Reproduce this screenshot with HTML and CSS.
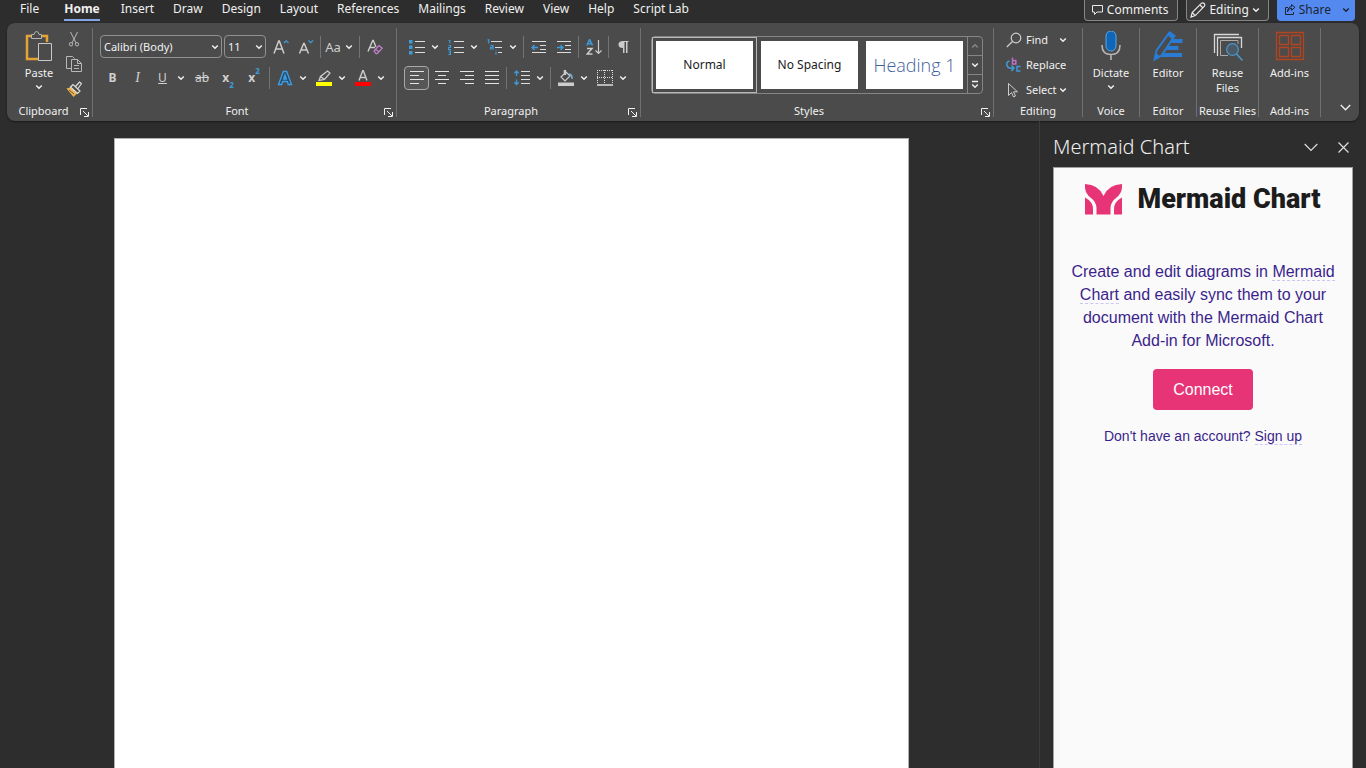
FILE: index.html
```
<!DOCTYPE html>
<html lang="en">
<head>
    <meta charset="UTF-8">
    <meta name="viewport" content="width=device-width, initial-scale=1.0">
    <title>Document - Mermaid Chart</title>
    <link rel="stylesheet" href="styles.css">
</head>
<body>
    <svg class="defs" aria-hidden="true">
        <symbol id="chev" viewBox="0 0 8 6"><path d="M1.2 1.5L4 4.2l2.8-2.7" fill="none" stroke="currentColor" stroke-width="1.5"/></symbol>
        <symbol id="launch" viewBox="0 0 9 9"><path d="M.5 7V.5H7M3 3l5 5M8.500 4v4.500H4" fill="none" stroke="currentColor"/></symbol>
    </svg>

    <header class="topbar">
        <nav class="tabs">
            <a href="#">File</a>
            <a href="#" class="active">Home</a>
            <a href="#">Insert</a>
            <a href="#">Draw</a>
            <a href="#">Design</a>
            <a href="#">Layout</a>
            <a href="#">References</a>
            <a href="#">Mailings</a>
            <a href="#">Review</a>
            <a href="#">View</a>
            <a href="#">Help</a>
            <a href="#">Script Lab</a>
        </nav>
        <div class="actions">
            <button class="action">
                <svg width="13" height="12" viewBox="0 0 13 12"><path d="M1.500 1.500h10v6.500H6L3.500 10.500V8h-2z" fill="none" stroke="#e8e8e8"/></svg>
                Comments
            </button>
            <button class="action mode">
                <svg width="16" height="16" viewBox="0 0 16 16"><path d="M1 15l1.200-4.500L11.500 1.200q1.500-.8 2.600.3t.3 2.600L5.300 13.600zM10 3l3 3M2.200 10.500l3.100 3.100" fill="none" stroke="#e8e8e8" stroke-width="1.200"/></svg>
                Editing
                <svg class="chev"><use href="#chev"/></svg>
            </button>
            <button class="action share">
                <svg width="12" height="12" viewBox="0 0 12 12"><path d="M4 3.500H1.500v7h8V8M3.500 8q.3-3.500 4-3.800V6.300L11 3.300 7.500.6v2q-3.700.3-4 5.400z" fill="none" stroke="#1c2433"/></svg>
                Share
                <svg class="chev"><use href="#chev"/></svg>
            </button>
        </div>
    </header>

    <section class="ribbon">
        <div class="group clipboard">
            <div class="group-body">
                <button class="big">
                    <svg width="28" height="32" viewBox="0 0 28 32">
                        <path d="M7 5H2v23h11M17 5h5v6" fill="none" stroke="#e5a336" stroke-width="2.500"/>
                        <path d="M6.500 7.500v-4H9q.5-3 2.500-3t2.500 3h2.500v4z" fill="#4b4b4b" stroke="#b5b5b5"/>
                        <path d="M13.500 12.500h13v17h-13z" fill="#4b4b4b" stroke="#c8c8c8"/>
                    </svg>
                    <span>Paste</span>
                    <svg class="chev"><use href="#chev"/></svg>
                </button>
                <div class="stack">
                    <button class="tool" aria-label="Cut"><svg width="16" height="16" viewBox="0 0 16 16"><path d="M4.500 1l5.500 11M11.500 1L6 12" fill="none" stroke="#b8b8b8"/><circle cx="5" cy="13.300" r="1.700" fill="none" stroke="#b8b8b8"/><circle cx="11" cy="13.300" r="1.700" fill="none" stroke="#b8b8b8"/></svg></button>
                    <button class="tool" aria-label="Copy"><svg width="16" height="16" viewBox="0 0 16 16"><path d="M5 12.500H.5v-12h6l2 2M5.500 3.500h6l4 4v8h-10zM11.500 3.500v4h4M8 9.500h5M8 12.500h5" fill="none" stroke="#b8b8b8"/></svg></button>
                    <button class="tool" aria-label="Format painter"><svg width="16" height="16" viewBox="0 0 16 16"><path d="M.5 7.500l5-1.500 6 6-4 4z" fill="#eeb451"/><path d="M4.500 6l2.500-2.500 7 6.500-2.500 2.500zM9.500 5.500L13.500 1l2 1.500L12 7.500" fill="#4b4b4b" stroke="#ddd" stroke-width="1.200"/><path d="M3 9l5 4" stroke="#805a20"/></svg></button>
                </div>
            </div>
            <div class="caption">Clipboard<button class="launch" aria-label="Clipboard options"><svg width="9" height="9"><use href="#launch"/></svg></button></div>
        </div>

        <div class="group font">
            <div class="group-body rows">
                <div class="row">
                    <label class="combo family"><select aria-label="Font"><option>Calibri (Body)</option></select><svg class="chev"><use href="#chev"/></svg></label>
                    <label class="combo size"><select aria-label="Font size"><option>11</option></select><svg class="chev"><use href="#chev"/></svg></label>
                    <button class="tool" aria-label="Grow font"><svg width="16" height="16" viewBox="0 0 16 16"><path d="M1 14.500L5.700 2h.6L11 14.500M2.800 10h6.500" fill="none" stroke="#ccc" stroke-width="1.500"/><path d="M11 4l2.200-2.200L15.500 4" fill="none" stroke="#3f9bd8" stroke-width="1.300"/></svg></button>
                    <button class="tool" aria-label="Shrink font"><svg width="16" height="16" viewBox="0 0 16 16"><path d="M1.500 14.500L5.700 4.500h.5l4.300 10M3 11h6" fill="none" stroke="#ccc" stroke-width="1.500"/><path d="M10.500 1.500l2.200 2.200L15 1.500" fill="none" stroke="#3f9bd8" stroke-width="1.300"/></svg></button>
                    <span class="sep"></span>
                    <div class="split"><button class="tool case">Aa</button><button class="drop" aria-label="Case options"><svg class="chev"><use href="#chev"/></svg></button></div>
                    <span class="sep"></span>
                    <button class="tool" aria-label="Clear formatting"><svg width="16" height="16" viewBox="0 0 16 16"><path d="M1 12.500L5.700 1.500h.6L9 8M3 8.500h5" fill="none" stroke="#ccc" stroke-width="1.400"/><path d="M7 12l5-5.500 3.200 2.700-5 5.500H9zM8.500 10l3.500 3" fill="none" stroke="#c77fd0" stroke-width="1.200"/></svg></button>
                </div>
                <div class="row">
                    <button class="tool bold">B</button>
                    <button class="tool italic">I</button>
                    <div class="split"><button class="tool underline">U</button><button class="drop" aria-label="Underline options"><svg class="chev"><use href="#chev"/></svg></button></div>
                    <button class="tool script strike">ab</button>
                    <button class="tool script bold">x<sub>2</sub></button>
                    <button class="tool script bold">x<sup>2</sup></button>
                    <span class="sep"></span>
                    <div class="split">
                        <button class="tool" aria-label="Text effects"><svg width="16" height="16" viewBox="0 0 16 16"><path d="M1.500 14.500L6.300 1.500h3.400l4.800 13h-3.200l-1-3H5.700l-1 3zM6.600 9h2.800L8 5z" fill="#264c6b" stroke="#3f9ee6" stroke-width="1.300"/></svg></button>
                        <button class="drop" aria-label="Text effect options"><svg class="chev"><use href="#chev"/></svg></button>
                    </div>
                    <div class="split">
                        <button class="tool" aria-label="Highlight"><svg width="16" height="16" viewBox="0 0 16 16"><path d="M0 12h16v4H0z" fill="#ff0"/><path d="M3 10.500l1.500-4 7-5.500 2.500 2-5.500 6.500zM4.500 6.500l4 3" fill="none" stroke="#ccc" stroke-width="1.300"/></svg></button>
                        <button class="drop" aria-label="Highlight colors"><svg class="chev"><use href="#chev"/></svg></button>
                    </div>
                    <div class="split">
                        <button class="tool" aria-label="Font color"><svg width="16" height="16" viewBox="0 0 16 16"><path d="M0 12h16v4H0z" fill="#f00"/><path d="M4 10.500L7.700.8h.6L12 10.500M5.200 7.500h5.600" fill="none" stroke="#ccc" stroke-width="1.400"/></svg></button>
                        <button class="drop" aria-label="Font colors"><svg class="chev"><use href="#chev"/></svg></button>
                    </div>
                </div>
            </div>
            <div class="caption">Font<button class="launch" aria-label="Font options"><svg width="9" height="9"><use href="#launch"/></svg></button></div>
        </div>

        <div class="group paragraph">
            <div class="group-body rows">
                <div class="row">
                    <div class="split">
                        <button class="tool" aria-label="Bullets"><svg width="16" height="16" viewBox="0 0 16 16"><path d="M0 1h3.500v3.500H0zM0 6.500h3.500V10H0zM0 12h3.500v3.500H0z" fill="#3f9bd8"/><path d="M6 2.500h10M6 8.500h10M6 13.500h10" stroke="#ddd"/></svg></button>
                        <button class="drop" aria-label="Bullet library"><svg class="chev"><use href="#chev"/></svg></button>
                    </div>
                    <div class="split">
                        <button class="tool" aria-label="Numbering"><svg width="16" height="16" viewBox="0 0 16 16"><path d="M.5 1.500h1.300V4.500M.5 6.500h2v2h-2v2h2.500M.5 12h2v3.500H.3M1 13.700h1.500" fill="none" stroke="#3f9bd8" stroke-width="1.100"/><path d="M6 2.500h10M6 8.500h10M6 13.500h10" stroke="#ddd"/></svg></button>
                        <button class="drop" aria-label="Numbering library"><svg class="chev"><use href="#chev"/></svg></button>
                    </div>
                    <div class="split">
                        <button class="tool" aria-label="Multilevel list"><svg width="16" height="16" viewBox="0 0 16 16"><path d="M.5.800h1.300V4.500M3.500 6.500h2.500V10H3.500V8.300H6M9 11v.800M9 13v2.500" fill="none" stroke="#3f9bd8" stroke-width="1.200"/><path d="M4 2.500h11M8 8.500h7M11 13.500h4" stroke="#ddd"/></svg></button>
                        <button class="drop" aria-label="List library"><svg class="chev"><use href="#chev"/></svg></button>
                    </div>
                    <span class="sep"></span>
                    <button class="tool" aria-label="Decrease indent"><svg width="16" height="16" viewBox="0 0 16 16"><path d="M1 2.500h14M9 6.500h6M9 10.500h6M1 13.500h14" stroke="#ddd"/><path d="M7 8.500H1.500M3.500 6l-2.500 2.500L3.500 11" fill="none" stroke="#3f9bd8" stroke-width="1.300"/></svg></button>
                    <button class="tool" aria-label="Increase indent"><svg width="16" height="16" viewBox="0 0 16 16"><path d="M1 2.500h14M9 6.500h6M9 10.500h6M1 13.500h14" stroke="#ddd"/><path d="M1 8.500h5.500M4.500 6L7 8.500 4.500 11" fill="none" stroke="#3f9bd8" stroke-width="1.300"/></svg></button>
                    <span class="sep"></span>
                    <button class="tool" aria-label="Sort"><svg width="16" height="16" viewBox="0 0 16 16"><path d="M.8 6.500L3.500.8h.3l2.700 5.700M1.800 4.700h3.700" fill="none" stroke="#3f9bd8" stroke-width="1.500"/><path d="M1 9.500h5L1.200 15h5.300" fill="none" stroke="#ccc" stroke-width="1.500"/><path d="M12.500 1v13.500M9.500 11.500l3 3 3-3" fill="none" stroke="#ccc" stroke-width="1.200"/></svg></button>
                    <span class="sep"></span>
                    <button class="tool" aria-label="Show marks"><svg width="16" height="16" viewBox="0 0 16 16"><path d="M7 2h5.500v1H11.500v11h-1.500V3H8.500v11H7V9Q2.500 9 2.500 5.500T7 2z" fill="#ccc"/></svg></button>
                </div>
                <div class="row">
                    <button class="tool pressed" aria-label="Align left"><svg width="16" height="16" viewBox="0 0 16 16"><path d="M1 1.500h14M1 5.500h9M1 9.500h14M1 13.500h9" stroke="#e4e4e4"/></svg></button>
                    <button class="tool" aria-label="Center"><svg width="16" height="16" viewBox="0 0 16 16"><path d="M1 1.500h14M4 5.500h8M1 9.500h14M4 13.500h8" stroke="#e4e4e4"/></svg></button>
                    <button class="tool" aria-label="Align right"><svg width="16" height="16" viewBox="0 0 16 16"><path d="M1 1.500h14M6 5.500h9M1 9.500h14M6 13.500h9" stroke="#e4e4e4"/></svg></button>
                    <button class="tool" aria-label="Justify"><svg width="16" height="16" viewBox="0 0 16 16"><path d="M1 1.500h14M1 5.500h14M1 9.500h14M1 13.500h14" stroke="#e4e4e4"/></svg></button>
                    <span class="sep"></span>
                    <div class="split">
                        <button class="tool" aria-label="Line spacing"><svg width="16" height="16" viewBox="0 0 16 16"><path d="M2.500 1v5M.3 3.300L2.500 1l2.200 2.300M2.500 9.500v5M.3 12.200l2.200 2.300 2.200-2.300" fill="none" stroke="#3f9bd8" stroke-width="1.300"/><path d="M7 1.500h9M7 5.500h9M7 9.500h9M7 13.500h9" stroke="#ddd"/></svg></button>
                        <button class="drop" aria-label="Spacing options"><svg class="chev"><use href="#chev"/></svg></button>
                    </div>
                    <span class="sep"></span>
                    <div class="split">
                        <button class="tool" aria-label="Shading"><svg width="16" height="16" viewBox="0 0 16 16"><path d="M0 12.500h16V16H0z" fill="#ccc"/><path d="M3 7l5-5 4 4-5 5zM7.500 5V.500H6.300V3.500" fill="none" stroke="#ccc" stroke-width="1.200"/><path d="M11 4q3.500.5 3 5" fill="none" stroke="#72b4dd" stroke-width="1.500"/></svg></button>
                        <button class="drop" aria-label="Shading colors"><svg class="chev"><use href="#chev"/></svg></button>
                    </div>
                    <div class="split">
                        <button class="tool" aria-label="Borders"><svg width="16" height="16" viewBox="0 0 16 16"><path d="M0 .5h16M0 7.500h16M.5 0v14M7.500 0v14M15.500 0v14" fill="none" stroke="#ddd" stroke-dasharray="1 1"/><path d="M0 15h16" stroke="#ddd" stroke-width="1.500"/></svg></button>
                        <button class="drop" aria-label="Border options"><svg class="chev"><use href="#chev"/></svg></button>
                    </div>
                </div>
            </div>
            <div class="caption">Paragraph<button class="launch" aria-label="Paragraph options"><svg width="9" height="9"><use href="#launch"/></svg></button></div>
        </div>

        <div class="group styles">
            <div class="gallery">
                <button class="style selected">Normal</button>
                <button class="style">No Spacing</button>
                <button class="style heading">Heading 1</button>
                <div class="scroller">
                    <button class="dim" aria-label="Previous styles"><svg class="chev up"><use href="#chev"/></svg></button>
                    <button aria-label="Next styles"><svg class="chev"><use href="#chev"/></svg></button>
                    <button aria-label="All styles"><svg width="8" height="9" viewBox="0 0 8 9"><path d="M1 1.500h6M1.200 4.500L4 7.200l2.800-2.700" fill="none" stroke="currentColor" stroke-width="1.400"/></svg></button>
                </div>
            </div>
            <div class="caption">Styles<button class="launch" aria-label="Style options"><svg width="9" height="9"><use href="#launch"/></svg></button></div>
        </div>

        <div class="group editing">
            <div class="group-body list">
                <button class="command">
                    <svg width="16" height="16" viewBox="0 0 16 16"><circle cx="10" cy="6" r="4.800" fill="none" stroke="#ccc" stroke-width="1.200"/><path d="M6.500 9.500L.8 15" stroke="#ccc" stroke-width="1.300"/></svg>
                    Find
                    <svg class="chev far"><use href="#chev"/></svg>
                </button>
                <button class="command">
                    <svg width="16" height="16" viewBox="0 0 16 16"><path d="M6.500.5v6.500h3.300V3.500H6.500" fill="none" stroke="#c06fc8" stroke-width="1.500"/><path d="M14.500 9.500h-3.500v4.500h3.500M3.500 4Q0 5 1 8.500T8 11M5.500 8.500L8 11l-2.500 3" fill="none" stroke="#3f9bd8" stroke-width="1.500"/></svg>
                    Replace
                </button>
                <button class="command">
                    <svg width="16" height="16" viewBox="0 0 16 16"><path d="M2.500 1.500v12l3-3 2 4.500 2-1-2-4.200h4z" fill="none" stroke="#ccc"/></svg>
                    Select
                    <svg class="chev near"><use href="#chev"/></svg>
                </button>
            </div>
            <div class="caption">Editing</div>
        </div>

        <div class="group narrow">
            <button class="big">
                <svg width="28" height="32" viewBox="0 0 28 32"><rect x="9" y="0" width="10" height="20" rx="5" fill="#0f66b8" stroke="#5ba7e4"/><path d="M5 14q0 9.500 9 9.500t9-9.500M14 23.500V29" fill="none" stroke="#b5b5b5" stroke-width="1.600"/></svg>
                <span>Dictate</span>
                <svg class="chev"><use href="#chev"/></svg>
            </button>
            <div class="caption">Voice</div>
        </div>

        <div class="group narrow">
            <button class="big">
                <svg width="30" height="32" viewBox="0 0 30 32"><path d="M15 8h14.500v4H13zM12 15h13.500v4H11zM9 22h20v4H8z" fill="#2a7bd3"/><path d="M1.500 28.500l2-9L16.500 1.500l5 3.500L8.500 24.500z" fill="#4b4b4b" stroke="#2a7bd3" stroke-width="2"/><path d="M14 4l5 4 3-4-5-3.500zM1 29l7-3-5-4z" fill="#2a7bd3"/></svg>
                <span>Editor</span>
            </button>
            <div class="caption">Editor</div>
        </div>

        <div class="group reuse">
            <button class="big">
                <svg width="30" height="32" viewBox="0 0 30 32"><path d="M1.500 22V3.500H26M4.500 25V6.500H28.500V17" fill="none" stroke="#d8d8d8" stroke-width="1.300"/><path d="M25 13V9.500H7.500v15H15" fill="none" stroke="#aaa"/><circle cx="19.500" cy="18.500" r="5.800" fill="#4b5a66" stroke="#4a95c9" stroke-width="1.300"/><path d="M23.500 23l6 6.500" stroke="#4a95c9" stroke-width="1.600"/></svg>
                <span>Reuse<br>Files</span>
            </button>
            <div class="caption">Reuse Files</div>
        </div>

        <div class="group reuse">
            <button class="big">
                <svg width="30" height="32" viewBox="0 0 30 32"><path d="M1.500 1.500h27v27h-27zM4.500 4.500h9v9h-9zM16.500 4.500h9v9h-9zM4.500 16.500h9v9h-9zM16.500 16.500h9v9h-9z" fill="none" stroke="#b4431f" stroke-width="1.300"/></svg>
                <span>Add-ins</span>
            </button>
            <div class="caption">Add-ins</div>
        </div>

        <button class="collapse" aria-label="Collapse ribbon"><svg width="11" height="7" viewBox="0 0 11 7"><path d="M.8 1l4.700 4.700L10.200 1" fill="none" stroke="#eee" stroke-width="1.400"/></svg></button>
    </section>

    <main class="workspace">
        <div class="canvas"><article class="page"></article></div>
        <aside class="pane">
            <div class="pane-head">
                <h2>Mermaid Chart</h2>
                <button aria-label="Pane options"><svg width="14" height="9" viewBox="0 0 14 9"><path d="M.7 1L7 7.300 13.300 1" fill="none" stroke="#ddd" stroke-width="1.200"/></svg></button>
                <button aria-label="Close pane"><svg width="11" height="11" viewBox="0 0 11 11"><path d="M.5.5l10 10M10.500.5l-10 10" fill="none" stroke="#ddd" stroke-width="1.200"/></svg></button>
            </div>
            <div class="addin">
                <div class="brand">
                    <svg width="37" height="31" viewBox="0 0 37 31">
                        <path d="M0 0Q13.500.5 18.500 12 23.500.5 37 0q.8 8.500-5.500 13.500Q25 18.500 25.500 25v5.500h-14V25q.5-6.500-6-11.500Q-.8 8.500 0 0z" fill="#e63476"/>
                        <path d="M0 13.500q8.500 4.500 8 12v5H0zM37 13.500q-8.500 4.500-8 12v5h8z" fill="#e63476"/>
                    </svg>
                    <span>Mermaid Chart</span>
                </div>
                <p class="intro">Create and edit diagrams in <a href="#">Mermaid Chart</a> and easily sync them to your document with the Mermaid Chart Add-in for Microsoft.</p>
                <button class="connect">Connect</button>
                <p class="signup">Don't have an account? <a href="#">Sign up</a></p>
            </div>
        </aside>
    </main>
</body>
</html>
```
FILE: styles.css
```
* {
    box-sizing: border-box;
}
body {
    margin: 0;
    height: 100vh;
    display: flex;
    flex-direction: column;
    overflow: hidden;
    background-color: #2d2d2d;
    color: #f0f0f0;
    font: 12px/16px "Noto Sans", "Open Sans", sans-serif;
}
button, select {
    font: inherit;
    color: inherit;
    background: none;
    border: 0;
    padding: 0;
    margin: 0;
}
svg {
    display: block;
    flex: none;
}
.defs {
    position: absolute;
    width: 0;
    height: 0;
}
.chev {
    width: 8px;
    height: 6px;
}

/* tabs */
.topbar {
    display: flex;
    justify-content: space-between;
    height: 23px;
    padding: 0 11px 0 20px;
}
.tabs {
    display: flex;
    gap: 19px;
}
.tabs a {
    height: 21px;
    padding-top: 1px;
    color: #f0f0f0;
    text-decoration: none;
    white-space: nowrap;
}
.tabs a.active {
    margin-right: 2px;
    font-weight: bold;
    border-bottom: 2px solid #84a5e6;
}
.tabs a:first-child {
    margin-right: 6px;
}
.actions {
    display: flex;
    gap: 8px;
}
.action {
    display: flex;
    align-items: center;
    gap: 3px;
    height: 21px;
    padding: 0 9px 1px 6px;
    background-color: #3b3b3b;
    border: 1px solid #868686;
    border-top: 0;
    border-radius: 0 0 4px 4px;
}
.action.mode {
    padding: 0 8px 1px 3px;
}
.action.share {
    padding: 0 4px 1px 6px;
    background-color: #548af0;
    border-color: #548af0;
    color: #1c2433;
}
.share .chev {
    margin-left: 8px;
}

/* ribbon */
.ribbon {
    display: flex;
    height: 98px;
    margin: 0 7px;
    padding: 5px 0 4px;
    flex: none;
    font-size: 11px;
    background-color: #4b4b4b;
    border-radius: 8px;
    box-shadow: 0 1px 2px #1a1a1a;
}
.group {
    position: relative;
    display: flex;
    flex-direction: column;
    justify-content: space-between;
    border-right: 1px solid #707070;
}
.group-body {
    display: flex;
}
.clipboard {
    width: 86px;
}
.font {
    width: 304px;
    padding-left: 7px;
}
.paragraph {
    width: 244px;
    padding-left: 7px;
}
.styles {
    flex: 1;
    padding: 8px 10px 0;
}
.editing {
    width: 89px;
}
.narrow {
    width: 57px;
}
.reuse {
    width: 62px;
}
.caption {
    height: 13px;
    line-height: 13px;
    text-align: center;
    white-space: nowrap;
}
.clipboard .caption {
    padding-right: 12px;
}
.font .caption, .paragraph .caption {
    padding-right: 22px;
}
.styles .caption {
    padding-right: 16px;
}
.launch {
    position: absolute;
    right: 3px;
    bottom: 0;
}
.big {
    display: flex;
    flex-direction: column;
    align-items: center;
    padding-top: 3px;
    line-height: 15px;
}
.big span {
    margin: 2px 0 4px;
}
.clipboard .big {
    width: 44px;
    margin-left: 10px;
}
.stack {
    display: flex;
    flex-direction: column;
    gap: 3px;
}
.rows {
    flex-direction: column;
    gap: 6px;
    padding-top: 6px;
}
.row {
    display: flex;
    align-items: center;
    height: 25px;
}
.tool {
    display: flex;
    align-items: center;
    justify-content: center;
    width: 25px;
    height: 22px;
    color: #d0d0d0;
    font-size: 12px;
}
.pressed {
    height: 24px;
    border: 1px solid #a8a8a8;
    border-radius: 4px;
    background-color: #565656;
}
.drop {
    display: flex;
    align-items: center;
    justify-content: center;
    width: 12px;
    height: 22px;
}
.split {
    display: flex;
    margin-right: 2px;
}
.sep {
    width: 1px;
    height: 22px;
    margin: 0 2px;
    background-color: #737373;
}
.case {
    width: 20px;
    font-size: 13px;
}
.bold {
    font-weight: bold;
}
.italic {
    font-family: "Liberation Serif", serif;
    font-style: italic;
    font-size: 14px;
}
.underline {
    text-decoration: underline;
}
.script {
    width: 26px;
}
.strike {
    text-decoration: line-through;
}
.script sub, .script sup {
    color: #3f9bd8;
    font-size: 8px;
    line-height: 8px;
}
.script sub {
    align-self: flex-end;
}
.script sup {
    align-self: flex-start;
}
.combo {
    display: flex;
    align-items: center;
    height: 23px;
    margin-right: 2px;
    padding-right: 2px;
    border: 1px solid #909090;
    border-radius: 4px;
}
.combo select {
    flex: 1;
    min-width: 0;
    padding-left: 3px;
    appearance: none;
}
.family {
    width: 122px;
}
.size {
    width: 42px;
}

/* style gallery */
.gallery {
    display: flex;
    height: 58px;
    border: 1px solid #858585;
    border-radius: 4px;
}
.style {
    flex: 1;
    margin: 4px;
    color: #1c1c1c;
    font-size: 12px;
    background-color: #fff;
}
.style.selected {
    outline: 1px solid #b8b8b8;
    outline-offset: 3px;
}
.style.heading {
    color: #44619c;
    font-family: "Open Sans", sans-serif;
    font-weight: 300;
    font-size: 18px;
}
.scroller {
    display: flex;
    flex-direction: column;
    width: 15px;
    border-left: 1px solid #858585;
}
.scroller button {
    flex: 1;
    display: flex;
    align-items: center;
    justify-content: center;
}
.scroller button + button {
    border-top: 1px solid #858585;
}
.scroller .dim {
    color: #858585;
}
.up {
    transform: rotate(180deg);
}

.list {
    flex-direction: column;
    gap: 1px;
    padding-left: 12px;
}
.command {
    display: flex;
    align-items: center;
    gap: 4px;
    height: 24px;
}
.far {
    margin-left: 7px;
}
.near {
    margin-left: -2px;
}
.collapse {
    align-self: flex-end;
    width: 38px;
    padding: 0 8px 6px 19px;
}

/* workspace */
.workspace {
    flex: 1;
    display: flex;
    min-height: 0;
}
.canvas {
    flex: 1;
    display: flex;
    justify-content: center;
    padding: 17px 17px 0 0;
}
.page {
    width: 100%;
    max-width: 795px;
    background-color: #fff;
    border: 1px solid #b0b0b0;
    border-bottom: 0;
}
.pane {
    display: flex;
    flex-direction: column;
    width: 327px;
    padding: 12px 13px 0 13px;
    border-left: 1px solid #3c3c3c;
}
.pane-head {
    display: flex;
    align-items: center;
    gap: 20px;
    height: 34px;
    padding: 0 4px 6px 0;
}
.pane-head h2 {
    flex: 1;
    margin: 0;
    font-size: 20px;
    font-weight: 300;
    line-height: 28px;
}
.addin {
    flex: 1;
    padding: 15px 14px 0;
    background-color: #fafafa;
    border: 1px solid #a0a0a0;
    border-bottom: 0;
    color: #3b1f8c;
    font-family: "Liberation Sans", Arial, sans-serif;
    text-align: center;
}
.brand {
    display: flex;
    align-items: center;
    justify-content: center;
    gap: 15px;
    height: 32px;
    color: #1c1c1c;
    font: 900 27px/32px Roboto, sans-serif;
    white-space: nowrap;
}
.addin a {
    color: inherit;
    text-decoration: none;
    border-bottom: 1px dashed #cfc5f2;
}
.intro {
    margin: 45px 0 17px;
    font-size: 16px;
    line-height: 23px;
}
.connect {
    height: 41px;
    padding: 0 20px;
    border-radius: 4px;
    background-color: #e63476;
    color: #fff;
    font-size: 16px;
}
.signup {
    margin: 16px 0 0;
    font-size: 14px;
    line-height: 20px;
}
```
